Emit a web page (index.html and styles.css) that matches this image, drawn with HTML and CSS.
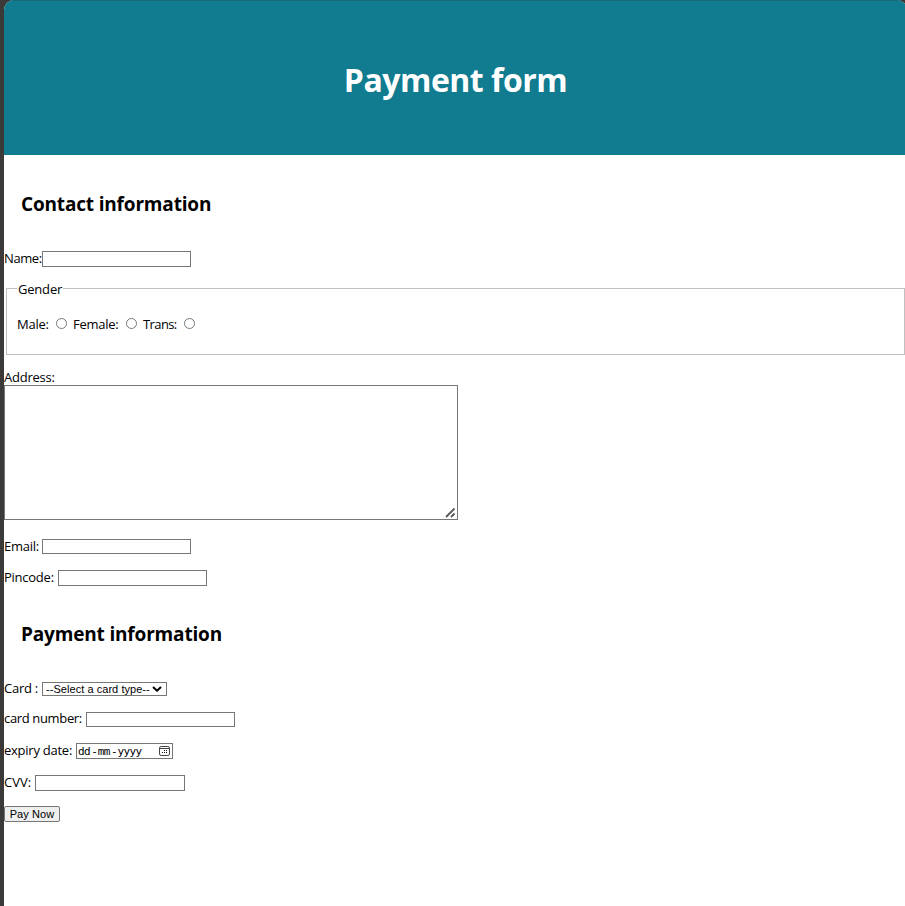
FILE: index.html
```html
<!DOCTYPE html>
<html lang="en">
<head>
<meta charset="utf-8">
<title>Payment form</title>
<link rel="stylesheet" href="styles.css">
</head>
<body>
<main class="page">
  <header class="banner"><h1>Payment form</h1></header>
  <form>
    <h2 class="contact-title"><span>Contact information</span></h2>
    <div class="row name"><label for="name">Name:</label><input id="name" type="text"></div>
    <fieldset>
      <legend>Gender</legend>
      <div class="choices">
        <label class="male" for="male">Male:</label><input id="male" type="radio" name="gender">
        <label class="female" for="female">Female:</label><input id="female" type="radio" name="gender">
        <label class="trans" for="trans">Trans:</label><input id="trans" type="radio" name="gender">
      </div>
    </fieldset>
    <div class="address">
      <label for="address">Address:</label>
      <textarea id="address"></textarea>
      <svg class="grip" width="11" height="11" viewBox="0 0 11 11"><path d="M1 10 9.5 1.5M6 10 9.5 6.5" fill="none" stroke="#57575b" stroke-width="1.8"/></svg>
    </div>
    <div class="row email"><label for="email">Email:</label><input id="email" type="text"></div>
    <div class="row pincode"><label for="pin">Pincode:</label><input id="pin" type="text"></div>
    <h2 class="payment-title"><span>Payment information</span></h2>
    <div class="row card"><label>Card :</label><div class="select"><span>--Select a card type--</span><svg width="10" height="6" viewBox="0 0 10 6"><path d="m1 1 4 3.7L9 1" fill="none" stroke="#000" stroke-width="2"/></svg></div></div>
    <div class="row number"><label for="number">card number:</label><input id="number" type="text"></div>
    <div class="row expiry"><label>expiry date:</label><div class="date"><span class="dd">dd</span><span class="dash">-</span><span class="mm">mm</span><span class="dash">-</span><span class="yy">yyyy</span><svg width="11" height="10" viewBox="0 0 11 10"><rect x=".5" y=".5" width="10" height="9" rx="1.6" fill="none" stroke="#444"/><path d="M1 2.5h9" stroke="#444"/><path d="M5 4.5h1M7 4.5h1M3 6.5h1M5 6.5h1M7 6.5h1" stroke="#111"/></svg></div></div>
    <div class="row cvv"><label for="cvv">CVV:</label><input id="cvv" type="text"></div>
    <button type="button">Pay Now</button>
  </form>
</main>
</body>
</html>
```
FILE: styles.css
```css
* { box-sizing: border-box; }
html { background: #3b3a38; overflow: hidden; }
body { margin: 0; color: #000; font: 13px/18px "Open Sans", "Noto Sans", sans-serif; }
.page { width: 903px; height: 906px; margin-left: 4px; overflow: hidden; background: #fff; border-radius: 10px 10px 0 0; }
.banner { height: 155px; padding-top: 57px; background: #117b8f; border-top: 1px solid #17697a; color: #fff; text-align: center; }
h1 { margin: 0; font-size: 32px; line-height: 44px; font-weight: 700; letter-spacing: -.5px; }
h2 { margin: 0; padding-left: 17px; font-size: 19px; line-height: 26px; font-weight: 700; letter-spacing: -.17px; white-space: nowrap; }
.contact-title { margin-top: 36px; }
.payment-title { margin-top: 34px; }
label { display: block; flex: none; white-space: nowrap; letter-spacing: -.25px; }
.row { display: flex; height: 18px; align-items: flex-start; }
.row label { margin-top: -1px; }
input[type="text"] { width: 149px; height: 16px; margin: 1px 0 0; padding: 1px 2px; border: 1px solid #767676; border-radius: 0; background: #fff; }
.name { margin-top: 33px; }
.name label, .email label, .card label { width: 38px; }
.name label { letter-spacing: -.4px; }
fieldset { width: 899px; height: 75px; margin: 12px 0 0 2px; padding: 0; border: 1px solid #c0c0c0; }
legend { height: 17px; margin-left: 10px; padding: 0 1px; width: 46px; white-space: nowrap; letter-spacing: -.2px; }
.choices { display: flex; padding: 18px 0 0 10px; }
.choices input { width: 11px; height: 11px; margin: 3px 6px 0 0; appearance: none; border: 1px solid #767676; border-radius: 50%; background: #fff; }
.male { width: 39px; }
.female { width: 53px; }
.trans { width: 41px; letter-spacing: -.6px; }
.address { position: relative; margin-top: 13px; width: 454px; height: 152px; }
.address label { height: 17px; }
textarea { display: block; width: 454px; height: 135px; margin: 0; padding: 2px; border: 1px solid #767676; resize: none; background: #fff; }
.grip { position: absolute; right: 2px; bottom: 2px; }
.email { margin-top: 18px; }
.email input, .number input { height: 15px; }
.pincode { margin-top: 13px; }
.pincode label { width: 54px; }
.card { margin-top: 33px; }
.select { display: flex; width: 125px; height: 14px; margin-top: 2px; padding: 0 4px 0 3px; align-items: center; justify-content: space-between; border: 1px solid #767676; font: 11px/12px "Liberation Sans", sans-serif; letter-spacing: .05px; white-space: nowrap; }
.number { margin-top: 12px; }
.number label { width: 82px; letter-spacing: -.35px; }
.number input { margin-top: 2px; }
.expiry { margin-top: 14px; }
.expiry label { width: 72px; }
.date { display: flex; width: 97px; height: 16px; margin-top: 1px; padding: 0 2px 0 1px; border: 1px solid #767676; font: 11px/15px "DejaVu Sans Mono", monospace; letter-spacing: -.6px; }
.dd { width: 13px; }
.mm { width: 13px; }
.dash { width: 7px; text-align: center; }
.yy { width: 42px; }
.date svg { flex: none; margin-top: 2px; }
.cvv { margin-top: 14px; }
.cvv label { width: 31px; letter-spacing: 0; }
.cvv input { width: 150px; }
button { display: block; width: 56px; height: 16px; margin: 14px 0 0; padding: 0; border: 1px solid #767676; border-radius: 2px; background: #efefef; color: #000; font: 11px/14px "Liberation Sans", sans-serif; letter-spacing: .1px; white-space: nowrap; }
```
